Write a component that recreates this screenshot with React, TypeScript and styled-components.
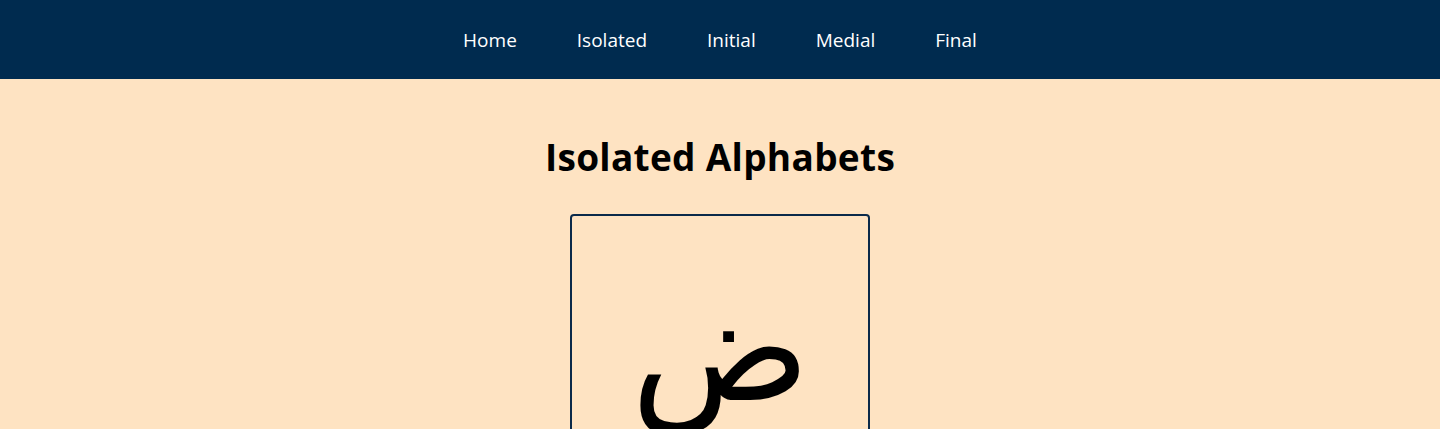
import { createGlobalStyle, styled } from 'styled-components';

const GlobalStyle = createGlobalStyle`
  html, body {
    margin: 0;
    padding: 0;
    background-color: #fee3c2;
    font-family: 'Open Sans', 'Noto Sans', sans-serif;
  }
`;

const links = ['Home', 'Isolated', 'Initial', 'Medial', 'Final'];

const App = () => {
  return (
    <>
      <GlobalStyle />
      <NavBar>
        <NavList>
          {links.map((link) => (
            <NavItem key={link}>
              <a href="#">{link}</a>
            </NavItem>
          ))}
        </NavList>
      </NavBar>
      <Main>
        <Title>Isolated Alphabets</Title>
        <Card>
          <Letter lang="ar" dir="rtl">
            ض
          </Letter>
        </Card>
      </Main>
    </>
  );
};

const NavBar = styled.nav`
  height: 79px;
  background-color: #002b4f;
  display: flex;
  align-items: center;
  justify-content: center;
`;

const NavList = styled.ul`
  list-style: none;
  margin: 0;
  padding: 0;
  display: flex;
  gap: 60px;
`;

const NavItem = styled.li`
  & > a {
    color: #ffffff;
    text-decoration: none;
    font-size: 19px;
    line-height: 24px;
  }
`;

const Main = styled.main`
  display: flex;
  flex-direction: column;
  align-items: center;
  padding-top: 55px;
`;

const Title = styled.h1`
  margin: 0 0 34px;
  font-size: 37px;
  line-height: 46px;
  letter-spacing: 0.3px;
  font-weight: 700;
  color: #000000;
`;

const Card = styled.div`
  width: 296px;
  height: 300px;
  border: 2px solid #0b2a4a;
  border-radius: 4px;
  display: flex;
  align-items: flex-start;
  justify-content: center;
`;

const Letter = styled.span`
  font-family: 'Liberation Serif', serif;
  font-size: 148px;
  line-height: 1;
  color: #000000;
  margin-top: 60px;
`;

export default App;
